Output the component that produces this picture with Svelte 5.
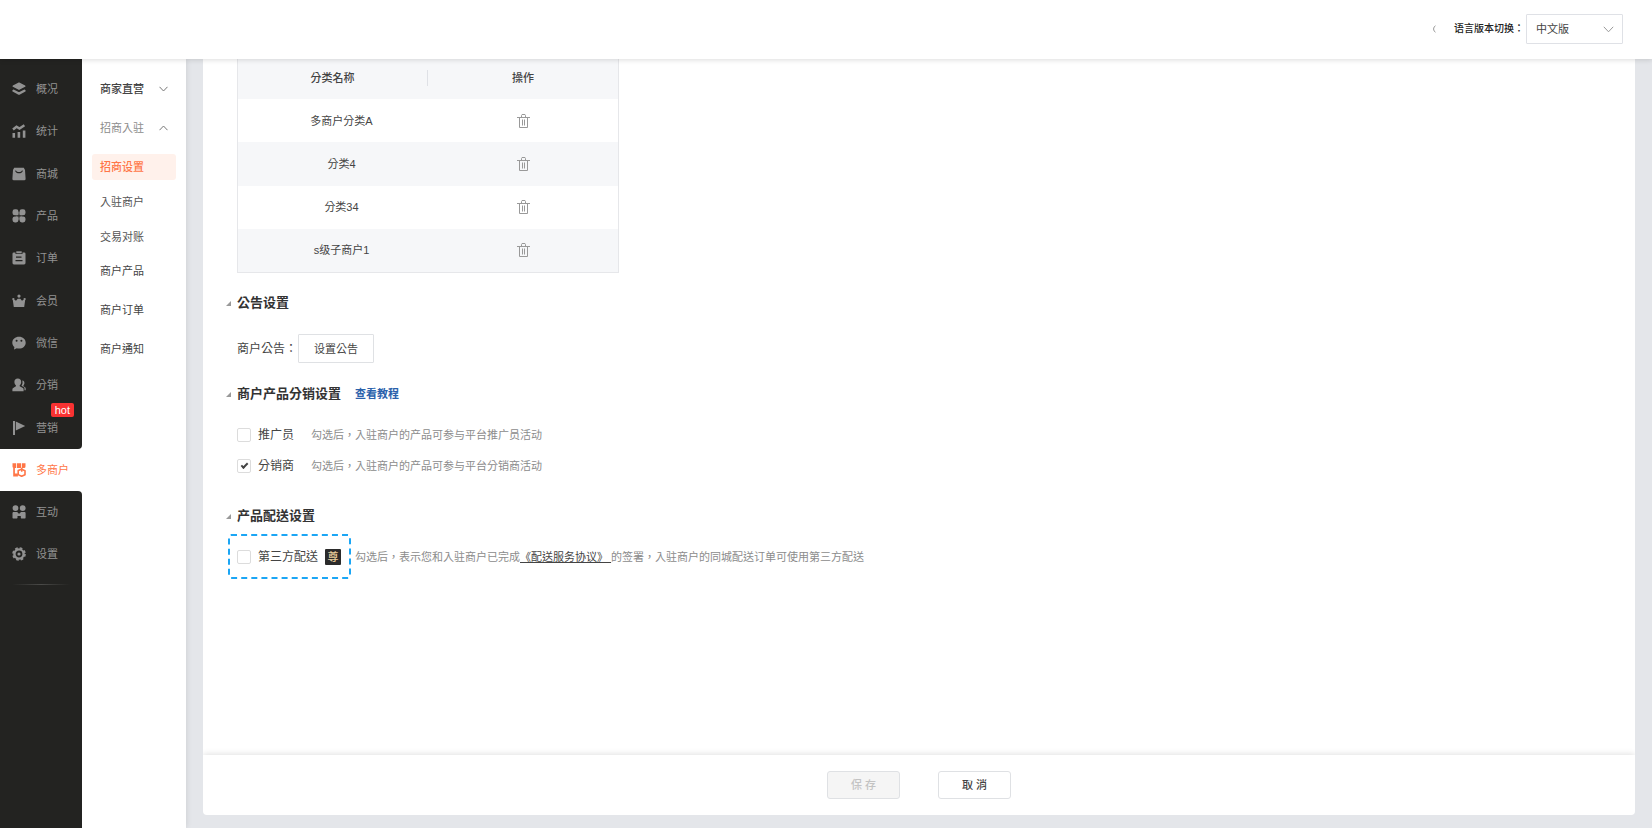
<script>
	let topMenu = [
		{ name: "概况", icon: "layers" },
		{ name: "统计", icon: "chart" },
		{ name: "商城", icon: "bag" },
		{ name: "产品", icon: "clover" },
		{ name: "订单", icon: "order" },
		{ name: "会员", icon: "crown" },
		{ name: "微信", icon: "wechat" },
		{ name: "分销", icon: "people" },
		{ name: "营销", icon: "flag", hot: true },
	];
	let bottomMenu = [
		{ name: "互动", icon: "team" },
		{ name: "设置", icon: "gear" },
	];
	let subMenu = ["招商设置", "入驻商户", "交易对账"];
	let links = ["商户产品", "商户订单", "商户通知"];

	let categories = ["多商户分类A", "分类4", "分类34", "s级子商户1"];

	let language = "zh";
	let promoter = false;
	let distributor = true;
	let thirdParty = false;

	const remove = (name) => {
		categories = categories.filter((c) => c !== name);
	};
</script>

<style>
	:global(body) {
		margin: 0;
	}

	.app {
		display: flex;
		flex-direction: column;
		height: 100vh;
		overflow: hidden;
		background: #e4e6ea;
		color: #444;
		font-family: "Liberation Sans", "Noto Sans CJK TC", "Noto Sans CJK SC", sans-serif;
		font-size: 11px;
		line-height: 16px;
	}
	a {
		color: inherit;
		text-decoration: none;
	}
	button,
	select {
		font: inherit;
		color: inherit;
	}
	svg {
		display: block;
		flex: none;
	}

	header {
		display: flex;
		align-items: center;
		justify-content: flex-end;
		box-sizing: border-box;
		height: 59px;
		padding: 0 29px 2px 0;
		flex: none;
		z-index: 2;
		background: #fff;
		box-shadow: 0 1px 5px rgba(0, 0, 0, 0.14);
	}
	header label {
		margin: 0 2px 0 17px;
		font-size: 10px;
		font-weight: 500;
		color: #222;
	}
	.select {
		position: relative;
		width: 97px;
	}
	.select select {
		display: block;
		width: 100%;
		height: 30px;
		padding: 0 9px;
		border: 1px solid #dfe1e6;
		border-radius: 1px;
		background: #fff;
		appearance: none;
	}
	.select svg {
		position: absolute;
		top: 12px;
		right: 9px;
		pointer-events: none;
	}

	.body {
		display: flex;
		flex: 1;
		min-height: 0;
	}

	/* main menu */
	.side {
		display: flex;
		flex-direction: column;
		width: 82px;
		flex: none;
		z-index: 1;
		background: #fff;
		color: #929292;
	}
	.block {
		display: flex;
		flex-direction: column;
		background: #232321;
	}
	.block.top {
		box-sizing: border-box;
		height: 390px;
		padding-top: 9px;
		border-radius: 0 0 4px 0;
	}
	.block.top a {
		flex: 1;
	}
	.block.rest {
		flex: 1;
		border-radius: 0 4px 0 0;
	}
	.side a {
		position: relative;
		display: flex;
		align-items: center;
		gap: 10px;
		height: 42px;
		padding-left: 12px;
	}
	.side a.active {
		color: #ff7647;
	}
	.hot {
		position: absolute;
		top: -4px;
		right: 8px;
		padding: 0 4px;
		border-radius: 2px;
		background: #f93232;
		color: #fff;
		line-height: 14px;
	}
	.line {
		height: 1px;
		margin: 9px 12px;
		background: linear-gradient(90deg, #232321, #4a4a48, #232321);
	}

	/* second level menu */
	.sub {
		box-sizing: border-box;
		width: 104px;
		flex: none;
		padding: 10px;
		background: #fff;
		box-shadow: 0 0 6px rgba(0, 0, 0, 0.12);
	}
	.sub a {
		display: flex;
		align-items: center;
		height: 39px;
		padding-left: 8px;
	}
	.sub a svg {
		margin-left: 15px;
	}
	.sub .strong {
		font-weight: 500;
	}
	.sub .open {
		color: #8c8c8c;
	}
	.sub ul {
		margin: 0 0 -3px;
		padding: 2px 0 0;
		list-style: none;
	}
	.sub li {
		display: flow-root;
	}
	.sub li a {
		height: 26px;
		margin: 5px 0 4px;
		color: #555;
	}
	.sub li a.active {
		border-radius: 3px;
		background: #fff1eb;
		color: #ff7647;
		font-weight: 500;
	}

	/* page */
	main {
		display: flex;
		flex-direction: column;
		flex: 1;
		min-width: 0;
		margin: 0 17px 13px;
		border-radius: 0 0 4px 4px;
		background: #fff;
		overflow: hidden;
	}
	.content {
		flex: 1;
		min-height: 0;
		padding-left: 34px;
	}
	table {
		width: 382px;
		height: 214px;
		border: solid #e6e7ea;
		border-width: 0 1px 1px;
		border-spacing: 0;
		table-layout: fixed;
	}
	th,
	td {
		padding: 0;
		text-align: center;
	}
	th {
		height: 38px;
		padding-bottom: 2px;
		font-weight: 500;
	}
	th:first-child div {
		border-right: 1px solid #dfe1e6;
	}
	td {
		height: 43px;
	}
	td:first-child {
		padding-left: 17px;
	}
	th,
	tbody tr:nth-child(even) {
		background: #f6f7f9;
	}
	.trash {
		display: block;
		margin: 0 auto;
		padding: 0;
		border: 0;
		background: none;
		color: #999;
		cursor: pointer;
	}

	h2 {
		display: flex;
		align-items: center;
		gap: 6px;
		margin: 0 0 0 -11px;
		color: #333;
		font-size: 13px;
		font-weight: 700;
		line-height: 20px;
	}
	h2 a {
		margin-left: 8px;
		font-size: 11px;
		color: #2a61ab;
	}
	section {
		padding-top: 20px;
	}
	.row {
		display: flex;
		align-items: center;
		height: 31px;
	}
	.row label,
	.row .name {
		display: flex;
		align-items: center;
		gap: 7px;
		font-size: 12px;
	}
	.row p {
		margin: 0;
		color: #8c8c8c;
	}
	.row p a {
		color: #444;
		text-decoration: underline;
		white-space: pre;
	}
	.notice {
		gap: 1px;
		padding-top: 20px;
	}
	.checks {
		padding: 15px 0 5px;
	}
	.checks p {
		margin-left: 17px;
	}
	input[type="checkbox"] {
		display: grid;
		place-items: center;
		box-sizing: border-box;
		width: 14px;
		height: 14px;
		margin: 0;
		border: 1px solid #dcdcdc;
		border-radius: 2px;
		background: #fff;
		appearance: none;
	}
	input:checked::before {
		content: "";
		width: 5px;
		height: 2px;
		margin-bottom: 2px;
		border: solid #444;
		border-width: 0 0 2px 2px;
		box-sizing: content-box;
		transform: rotate(-45deg);
	}
	.delivery {
		gap: 4px;
		height: 45px;
		margin: 8px 0 0 -9px;
	}
	.delivery .dashed {
		box-sizing: border-box;
		height: 45px;
		padding: 0 8px 0 7px;
		border: 2px dashed #1ba6f5;
		border-radius: 3px;
	}
	.vip {
		width: 16px;
		border-radius: 1px;
		background: #2b2b2b;
		color: #e8cd9b;
		font-size: 11px;
		font-weight: 500;
		line-height: 16px;
		text-align: center;
	}

	.btn {
		box-sizing: border-box;
		padding: 0;
		border: 1px solid #dfe1e4;
		background: #fff;
		cursor: pointer;
	}
	.set {
		width: 76px;
		height: 29px;
		border-radius: 1px;
	}
	footer {
		display: flex;
		align-items: center;
		justify-content: center;
		gap: 38px;
		height: 60px;
		flex: none;
		box-shadow: 0 -1px 6px rgba(0, 0, 0, 0.12);
	}
	footer .btn {
		width: 73px;
		height: 28px;
		border-radius: 3px;
		font-weight: 500;
	}
	footer .btn:disabled {
		background: #f5f5f5;
		color: #c3c3c3;
	}
</style>

{#snippet icon(name)}
	<svg width="14" height="14" viewBox="0 0 14 14" fill="currentColor">
		{#if name === "layers"}
			<path d="M7 1.2 12.8 4.2 7 7.2 1.2 4.2Z" stroke="currentColor" stroke-width="1.4" stroke-linejoin="round" />
			<path d="M1.6 8.8 7 11.6 12.4 8.8" fill="none" stroke="currentColor" stroke-width="2.4" stroke-linecap="round" stroke-linejoin="round" />
		{:else if name === "chart"}
			<path d="M1 5.5 4.5 2.7 7.5 4.5 12.4 1.2" fill="none" stroke="currentColor" stroke-width="2.4" />
			<path d="M.5 9h2.6v4.800H.5zM5.600 8h2.600v5.800H5.600zM10.800 6.500h2.600v7.300h-2.600z" />
		{:else if name === "bag"}
			<path fill-rule="evenodd" d="M2.2.8h9.600L13 3l.6 8.800a1.400 1.400 0 0 1-1.400 1.500H1.800A1.400 1.400 0 0 1 .4 11.800L1 3ZM3 3.700c1 3.400 7 3.400 8 0L10 3.400C9 5.400 5 5.400 4 3.400Z" />
		{:else if name === "clover"}
			<rect x=".5" y=".3" width="6" height="6" rx="2.4" />
			<rect x="7.5" y=".3" width="6" height="6" rx="2.4" />
			<rect x=".5" y="7.4" width="6" height="6" rx="2.4" />
			<rect x="7.5" y="7.4" width="6" height="6" rx="2.4" />
			<path d="M4 3.3h2.5v3H4zM7.5 3.3H10v3H7.5zM4 7.4h2.5v3H4zM7.5 7.4H10v3H7.5z" />
		{:else if name === "order"}
			<path fill-rule="evenodd" d="M1.8 1.500h1.700V3h7V1.500h1.700a1.300 1.300 0 0 1 1.300 1.300V12a1.400 1.400 0 0 1-1.400 1.400H1.900A1.400 1.400 0 0 1 .5 12V2.800A1.300 1.300 0 0 1 1.800 1.500ZM4 5.400v1.300h5.500V5.400ZM3.500 9v1.300h7V9Z" />
			<path d="M4.300.3h5.400v2H4.300z" />
		{:else if name === "crown"}
			<path d="M.6 4.500 4 6.800 5.700 4.700h2.600L10 6.800l3.400-2.300L12.200 13H1.800Z" />
			<circle cx="7" cy="2.100" r="1.600" />
			<circle cx="1.400" cy="5" r="1.100" />
			<circle cx="12.600" cy="5" r="1.100" />
		{:else if name === "wechat"}
			<path fill-rule="evenodd" d="M7 .8c3.800 0 6.700 2.500 6.700 5.900S10.800 12.600 7 12.600c-.8 0-1.500-.1-2.200-.3L2 13.400l.4-2.400C1.100 9.900.3 8.400.3 6.700.3 3.300 3.200.8 7 .8ZM4.600 3.800a1 1 0 1 0 0 2 1 1 0 0 0 0-2Zm4.800 0a1 1 0 1 0 0 2 1 1 0 0 0 0-2Z" />
		{:else if name === "people"}
			<path d="M5.8.5C8 .5 9.200 1.900 9.200 3.900c0 1.500-.7 2.700-1.500 3.400v1l3.200 1.700c.5.300.7.700.7 1.300v1.900H.4v-1.900c0-.6.300-1 .8-1.300l2.700-1.700v-1C3.100 6.600 2.400 5.400 2.400 3.900 2.400 1.900 3.600.5 5.800.5Z" />
			<path d="M10.200 2.500c1.700.2 2.500 1.400 2.200 3-.1.800-.5 1.400-1 1.900v.9l1.900 1.200c.3.200.4.500.4.900v1.800h-1.200v-1.600c0-.7-.3-1.200-.9-1.500L9.500 7.800c1.100-1.500 1.400-3.300.7-5.300Z" />
		{:else if name === "flag"}
			<path d="M1 0h2v14H1zM3.800.6 13.200 5 3.800 9.500Z" />
		{:else if name === "shop"}
			<path d="M.5.3h3.600v4.600H2A1.500 1.500 0 0 1 .5 3.400zM4.900.3h4.200v4.600H4.900zM9.900.3h3.600v3.100A1.500 1.500 0 0 1 12 4.900H9.900z" />
			<path d="M1.200 4.800h1.700v5.800h3v2.900H1.200z" />
			<path d="M9.600 6.200 13 7.700v4L9.600 13.300 6.200 11.600v-4Z" fill="none" stroke="currentColor" stroke-width="1.600" stroke-linejoin="round" />
			<path d="M9 4.800h1.500v4H9z" />
		{:else if name === "team"}
			<circle cx="3.500" cy="3.100" r="2.900" />
			<circle cx="10.700" cy="3.100" r="2.900" />
			<path d="M1.800 7h3.500l1.200 1.400h1.200L8.900 7h3.500c.8 0 1.200.5 1.200 1.300v4.200c0 .6-.3 1-1 1H9.800c-.7 0-1-.4-1-1V11H5.500v1.500c0 .6-.4 1-1 1h-3c-.6 0-1-.4-1-1V8.300C.5 7.500 1 7 1.800 7Z" />
		{:else if name === "gear"}
			<circle cx="7" cy="7" r="4.600" fill="none" stroke="currentColor" stroke-width="2.400" />
			<circle cx="7" cy="7" r="6" fill="none" stroke="currentColor" stroke-width="1.600" stroke-dasharray="2.700 2.010" />
			<circle cx="7" cy="7" r="1.600" />
		{/if}
	</svg>
{/snippet}

{#snippet chevron(up)}
	<svg width="9" height="6" viewBox="0 0 9 6" fill="none" stroke="#777">
		<path d={up ? "M.5 5.2 4.5 1 8.5 5.2" : "M.5.8 4.5 5 8.5.8"} />
	</svg>
{/snippet}

{#snippet mark()}
	<svg width="5" height="5" viewBox="0 0 5 5" fill="#999">
		<path d="M5 0v5H0Z" />
	</svg>
{/snippet}

<div class="app">
	<header>
		<svg width="5" height="8" viewBox="0 0 5 8" fill="none" stroke="#999">
			<path d="M3.5.8A3.6 3.6 0 0 0 3.5 7.2" />
		</svg>
		<label for="language">语言版本切换：</label>
		<div class="select">
			<select id="language" bind:value={language}>
				<option value="zh">中文版</option>
				<option value="en">English</option>
			</select>
			<svg width="11" height="7" viewBox="0 0 11 7" fill="none" stroke="#999">
				<path d="M.8.8 5.5 5.8 10.2.8" />
			</svg>
		</div>
	</header>

	<div class="body">
		<nav class="side">
			<div class="block top">
				{#each topMenu as item}
					<a href="#{item.icon}">
						{@render icon(item.icon)}
						<span>{item.name}</span>
						{#if item.hot}<span class="hot">hot</span>{/if}
					</a>
				{/each}
			</div>
			<a class="active" href="#shop">
				{@render icon("shop")}
				<span>多商户</span>
			</a>
			<div class="block rest">
				{#each bottomMenu as item}
					<a href="#{item.icon}">
						{@render icon(item.icon)}
						<span>{item.name}</span>
					</a>
				{/each}
				<div class="line"></div>
			</div>
		</nav>

		<nav class="sub">
			<a class="strong" href="#self">商家直营 {@render chevron(false)}</a>
			<a class="open" href="#join">招商入驻 {@render chevron(true)}</a>
			<ul>
				{#each subMenu as name, i}
					<li><a class:active={i === 0} href="#sub{i}">{name}</a></li>
				{/each}
			</ul>
			{#each links as name, i}
				<a href="#link{i}">{name}</a>
			{/each}
		</nav>

		<main>
			<div class="content">
				<table>
					<thead>
						<tr>
							<th><div>分类名称</div></th>
							<th>操作</th>
						</tr>
					</thead>
					<tbody>
						{#each categories as name}
							<tr>
								<td>{name}</td>
								<td>
									<button class="trash" type="button" aria-label="删除" on:click={() => remove(name)}>
										<svg width="13" height="14" viewBox="0 0 13 14" fill="none" stroke="currentColor">
											<path d="M0 3.5h13M4.5 3V1.5L5 .5h3l.5 1V3M2.5 4v9.500h8V4" />
											<path d="M5.500 5.500v6M7.500 5.500v6" />
										</svg>
									</button>
								</td>
							</tr>
						{/each}
					</tbody>
				</table>

				<section>
					<h2>{@render mark()}公告设置</h2>
					<div class="notice row">
						<span class="name">商户公告：</span>
						<button class="btn set" type="button">设置公告</button>
					</div>
				</section>

				<section>
					<h2>{@render mark()}商户产品分销设置 <a href="#help">查看教程</a></h2>
					<div class="checks">
						<div class="row">
							<label><input type="checkbox" bind:checked={promoter} />推广员</label>
							<p>勾选后，入驻商户的产品可参与平台推广员活动</p>
						</div>
						<div class="row">
							<label><input type="checkbox" bind:checked={distributor} />分销商</label>
							<p>勾选后，入驻商户的产品可参与平台分销商活动</p>
						</div>
					</div>
				</section>

				<section>
					<h2>{@render mark()}产品配送设置</h2>
					<div class="delivery row">
						<label class="dashed">
							<input type="checkbox" bind:checked={thirdParty} />第三方配送
							<span class="vip">尊</span>
						</label>
						<p>勾选后，表示您和入驻商户已完成<a href="#agreement">{"《配送服务协议》 "}</a>的签署，入驻商户的同城配送订单可使用第三方配送</p>
					</div>
				</section>
			</div>

			<footer>
				<button class="btn" type="button" disabled>保 存</button>
				<button class="btn" type="button">取 消</button>
			</footer>
		</main>
	</div>
</div>
